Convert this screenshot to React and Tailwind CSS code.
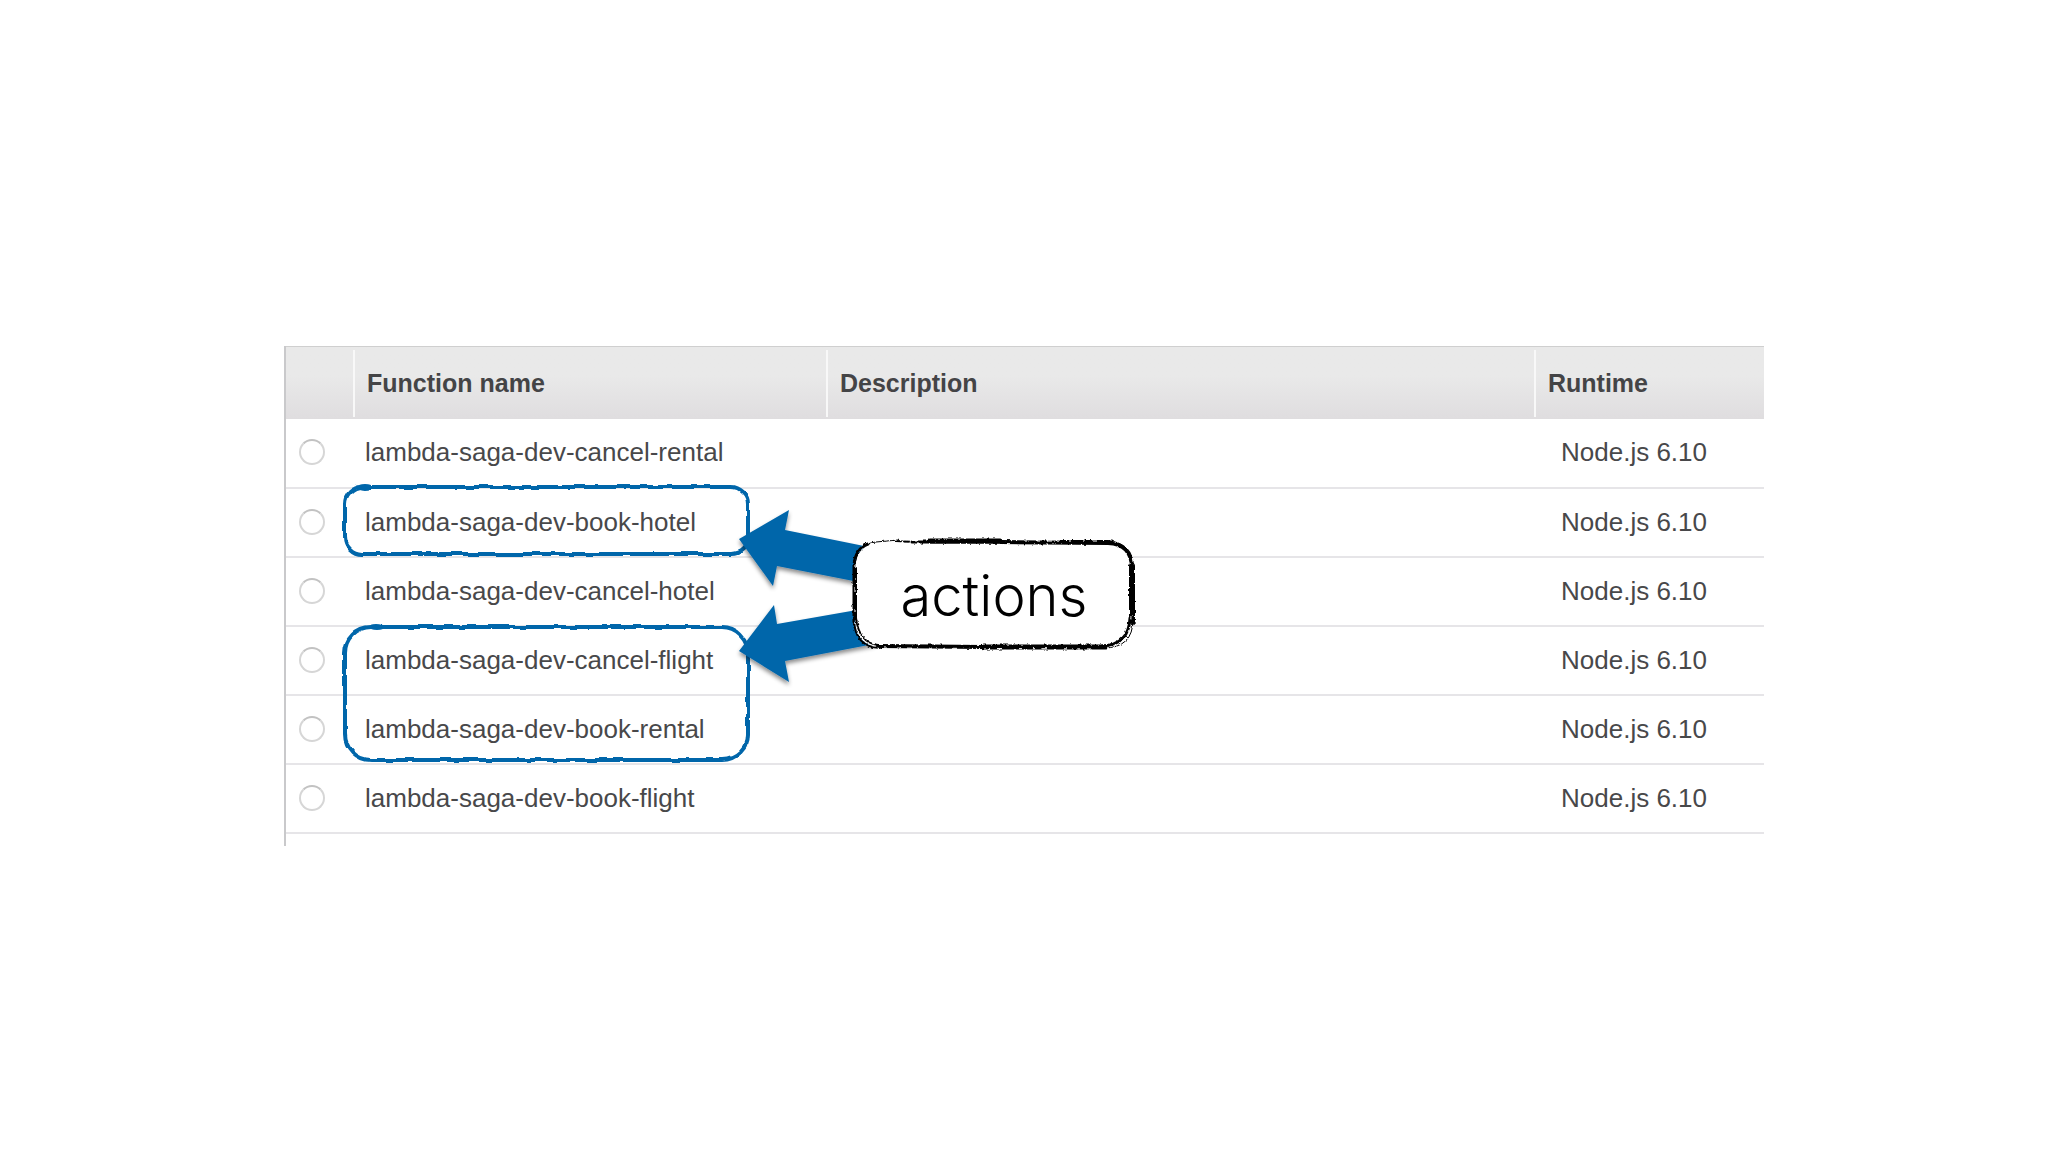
import React, { useState } from "react";

const functions = [
  { name: "lambda-saga-dev-cancel-rental", runtime: "Node.js 6.10" },
  { name: "lambda-saga-dev-book-hotel", runtime: "Node.js 6.10" },
  { name: "lambda-saga-dev-cancel-hotel", runtime: "Node.js 6.10" },
  { name: "lambda-saga-dev-cancel-flight", runtime: "Node.js 6.10" },
  { name: "lambda-saga-dev-book-rental", runtime: "Node.js 6.10" },
  { name: "lambda-saga-dev-book-flight", runtime: "Node.js 6.10" },
];

const HeaderCell = ({ children }) => (
  <th scope="col" className="p-0 text-left align-middle font-bold">
    <div className="flex h-[67px] items-center border-l-2 border-[#f8f8f8] pl-3 pt-[2px]">
      {children}
    </div>
  </th>
);

const FunctionTable = () => {
  const [selected, setSelected] = useState("");

  return (
    <div className="border-l-2 border-[#c9c9cb] pb-3">
      <table className="w-full table-fixed border-collapse text-[#48484a]">
        <colgroup>
          <col className="w-[67px]" />
          <col className="w-[473px]" />
          <col className="w-[708px]" />
          <col />
        </colgroup>
        <thead>
          <tr className="h-[73px] border-t border-[#cfcfcf] bg-linear-to-b from-[#e9e9e9] from-40% to-[#dfdddf] text-[25px] text-[#444446]">
            <td className="p-0"></td>
            <HeaderCell>Function name</HeaderCell>
            <HeaderCell>Description</HeaderCell>
            <HeaderCell>Runtime</HeaderCell>
          </tr>
        </thead>
        <tbody>
          {functions.map((fn) => (
            <tr key={fn.name} className="h-[69px] border-b-2 border-[#e6e5e8] text-[26px] leading-[30px]">
              <td className="p-0 pb-[2px] pl-[13px] align-middle">
                <input
                  type="radio"
                  name="function"
                  id={fn.name}
                  checked={selected === fn.name}
                  onChange={() => setSelected(fn.name)}
                  className="block size-[26px] appearance-none rounded-full border-2 border-[#d6d6d6] border-t-[#c2c2c2] bg-white checked:bg-[#0066aa]"
                />
              </td>
              <td className="p-0 pb-[2px] pl-3 align-middle">
                <label htmlFor={fn.name}>{fn.name}</label>
              </td>
              <td className="p-0"></td>
              <td className="p-0 pb-[2px] pl-[27px] align-middle">{fn.runtime}</td>
            </tr>
          ))}
        </tbody>
      </table>
    </div>
  );
};

// Hand drawn frames and arrows lying over the table
const Annotations = () => (
  <svg
    className="pointer-events-none absolute left-[50px] top-[130px]"
    width="810"
    height="300"
    viewBox="50 130 810 300"
    fill="none"
    aria-hidden="true"
  >
    <defs>
      <filter id="brush" x="-5%" y="-10%" width="110%" height="120%" colorInterpolationFilters="sRGB">
        <feTurbulence type="fractalNoise" baseFrequency="0.06" numOctaves="2" seed="4" />
        <feDisplacementMap in="SourceGraphic" scale="4" xChannelSelector="R" yChannelSelector="G" />
      </filter>
      <filter id="chalk" x="-5%" y="-10%" width="110%" height="120%" colorInterpolationFilters="sRGB">
        <feTurbulence type="fractalNoise" baseFrequency="0.3" numOctaves="2" seed="9" />
        <feDisplacementMap in="SourceGraphic" scale="3" xChannelSelector="R" yChannelSelector="G" />
      </filter>
      <filter id="shadow" x="-10%" y="-10%" width="120%" height="130%">
        <feDropShadow dx="0" dy="3" stdDeviation="2" floodColor="#000" floodOpacity="0.45" />
      </filter>
    </defs>

    <g stroke="#0066aa" strokeWidth="4" filter="url(#brush)">
      <rect x="61" y="141" width="403" height="67" rx="17" />
      <rect x="61" y="281" width="403" height="133" rx="26" />
      <ellipse cx="82" cy="141" rx="6" ry="2" fill="#0066aa" strokeWidth="2" />
      <ellipse cx="93" cy="281" rx="6" ry="2" fill="#0066aa" strokeWidth="2" />
    </g>

    <g fill="#0066aa" filter="url(#shadow)">
      <path d="M455 193 L505 164 L501 184 L590 202 V239 L493 220 L489 240 Z" />
      <path d="M455 305 L490 259 L493 278 L590 261 V298 L501 315 L505 336 Z" />
    </g>

    <rect x="571" y="196" width="277" height="105" rx="24" fill="#fff" />
    <g stroke="#000" strokeLinecap="round" filter="url(#chalk)">
      <path d="M571 220 Q572 198 592 196 L614 194" strokeWidth="1" />
      <path d="M612 195 L632 196" strokeWidth="2" strokeDasharray="5 3" />
      <path d="M628 196 L720 196" strokeWidth="3" />
      <path d="M646 195 L716 195" strokeWidth="5" />
      <path d="M716 196 L824 197 Q848 198 848 222" strokeWidth="4" />
      <path d="M780 195 L824 195 Q844 197 847 216" strokeWidth="2" />
      <path d="M848 220 L848 276" strokeWidth="6" />
      <path d="M849 274 Q849 302 820 302" strokeWidth="1" />
      <path d="M846 272 Q845 299 818 300" strokeWidth="3" />
      <path d="M822 301 L700 301" strokeWidth="5" />
      <path d="M700 301 L594 300" strokeWidth="4" />
      <path d="M596 302 Q571 301 570 274" strokeWidth="2" />
      <path d="M594 299 Q575 297 572 272" strokeWidth="2" />
      <path d="M570 276 L570 220 Q571 203 584 198" strokeWidth="3" />
      <path d="M572 274 L572 222" strokeWidth="2" />
    </g>
    <g stroke="#fff" strokeWidth="1" strokeDasharray="3 11 2 7 5 17" filter="url(#chalk)">
      <path d="M571 218 L571 278" />
      <path d="M600 302 L820 303" />
      <path d="M740 195 L815 195" />
      <path d="M847 270 Q846 300 822 301" />
    </g>
  </svg>
);

const App = () => {
  return (
    <main className="flex min-h-screen items-center bg-white pt-10 font-['Liberation_Sans',Arial,sans-serif]">
      <div className="relative mx-auto w-full max-w-[1480px]">
        <FunctionTable />
        <Annotations />
        <p className="absolute left-[570px] top-[196px] flex h-[108px] w-[280px] items-center justify-center font-['Inter',sans-serif] text-[56px] font-light text-black">
          actions
        </p>
      </div>
    </main>
  );
};

export default App;
